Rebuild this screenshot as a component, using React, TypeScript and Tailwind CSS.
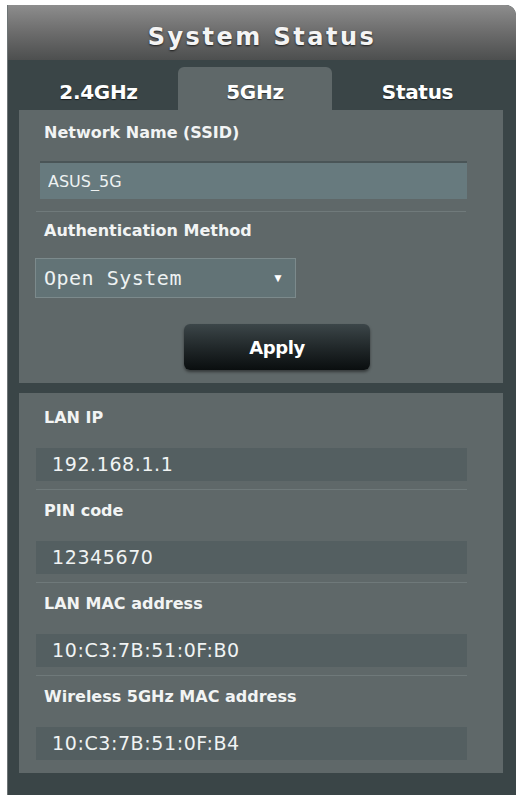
import React, { useState } from "react";

const tabs = [
	{ label: "2.4GHz", width: "w-[159px]" },
	{ label: "5GHz", width: "w-[154px]" },
	{ label: "Status", width: "w-[171px]" },
];

const statusRows = [
	{ label: "LAN IP", value: "192.168.1.1" },
	{ label: "PIN code", value: "12345670" },
	{ label: "LAN MAC address", value: "10:C3:7B:51:0F:B0" },
	{ label: "Wireless 5GHz MAC address", value: "10:C3:7B:51:0F:B4" },
];

const labelCls =
	"ml-[25px] text-[16px] leading-[18px] font-bold text-[#f2f4f4] font-['DejaVu_Sans',Verdana,sans-serif] tracking-[0px]";

const App = () => {
	const [activeTab, setActiveTab] = useState(1);
	const [ssid, setSsid] = useState("ASUS_5G");

	return (
		<div className="w-[529px] h-[795px] bg-white pl-[7px] pr-[13px] pt-[5px]">
			<div className="h-full flex flex-col bg-[#3a4547] rounded-tr-[10px] overflow-hidden border-l border-[#6d7475]">
				{/* title bar */}
				<div className="h-[55px] shrink-0 flex items-center justify-center pt-[8px] bg-gradient-to-b from-[#8d8d8d] via-[#6c6c6c] to-[#4d4f4f]">
					<h1 className="text-[24px] font-bold tracking-[2.5px] text-[#f4f4f4] font-['DejaVu_Sans',Verdana,sans-serif] [text-shadow:0_1px_2px_rgba(0,0,0,0.7)]">
						System Status
					</h1>
				</div>

				{/* band tabs */}
				<div className="h-[50px] shrink-0 flex items-end pl-[11px]">
					{tabs.map((tab, index) => (
						<button
							key={tab.label}
							onClick={() => setActiveTab(index)}
							className={`${tab.width} h-[43px] flex items-center justify-center pt-[6px] rounded-t-[6px] text-[20px] font-bold text-white font-['DejaVu_Sans',Verdana,sans-serif] tracking-[-0.3px] [text-shadow:0_1px_1px_rgba(0,0,0,0.6)] ${
								index === activeTab ? "bg-[#5f6869]" : "bg-transparent"
							}`}
						>
							{tab.label}
						</button>
					))}
				</div>

				{/* wireless settings */}
				<div className="ml-[11px] w-[484px] h-[273px] shrink-0 flex flex-col bg-[#5f6869]">
					<p className={`${labelCls} mt-[14px]`}>Network Name (SSID)</p>
					<input
						value={ssid}
						onChange={(e) => setSsid(e.target.value)}
						className="ml-[21px] mt-[19px] w-[427px] h-[38px] px-[8px] bg-[#677a7e] border-t-2 border-[#4a5557] text-[16px] text-[#eef2f2] font-['DejaVu_Sans',sans-serif] outline-none"
					/>
					<div className="ml-[17px] mt-[12px] w-[430px] h-px bg-[#4a5455] border-b border-[#707a7b]" />
					<p className={`${labelCls} mt-[10px]`}>Authentication Method</p>
					<div className="ml-[16px] mt-[18px] w-[261px] h-[40px] flex items-center justify-between px-[8px] bg-[#627376] border border-[#7c8a8c]">
						<span className="text-[20px] tracking-[0.5px] text-[#eef2f2] font-['DejaVu_Sans_Mono',monospace]">Open System</span>
						<span className="text-[12px] text-white mr-[3px]">▼</span>
					</div>
					<button className="ml-[165px] mt-[26px] w-[186px] h-[46px] rounded-[6px] bg-gradient-to-b from-[#3c4649] to-[#0a0e0f] shadow-[0_2px_3px_rgba(0,0,0,0.45)] text-[18px] font-bold text-white font-['DejaVu_Sans',Verdana,sans-serif] tracking-[-0.4px]">
						Apply
					</button>
				</div>

				{/* device status */}
				<div className="ml-[11px] mt-[10px] w-[484px] h-[380px] shrink-0 flex flex-col bg-[#5f6869] pt-[16px]">
					{statusRows.map((row, index) => (
						<div key={row.label} className="flex flex-col">
							<p className={labelCls}>{row.label}</p>
							<div className="ml-[17px] mt-[21px] w-[431px] h-[33px] flex items-center px-[16px] bg-[#545f61]">
								<span className="text-[19px] text-[#f0f3f3] font-['DejaVu_Sans',sans-serif] tracking-[0.6px]">
									{row.value}
								</span>
							</div>
							{index < statusRows.length - 1 && (
								<div className="ml-[17px] mt-[8px] mb-[12px] w-[431px] h-px bg-[#485254] border-b border-[#6f797a]" />
							)}
						</div>
					))}
				</div>
			</div>
		</div>
	);
};

export default App;
